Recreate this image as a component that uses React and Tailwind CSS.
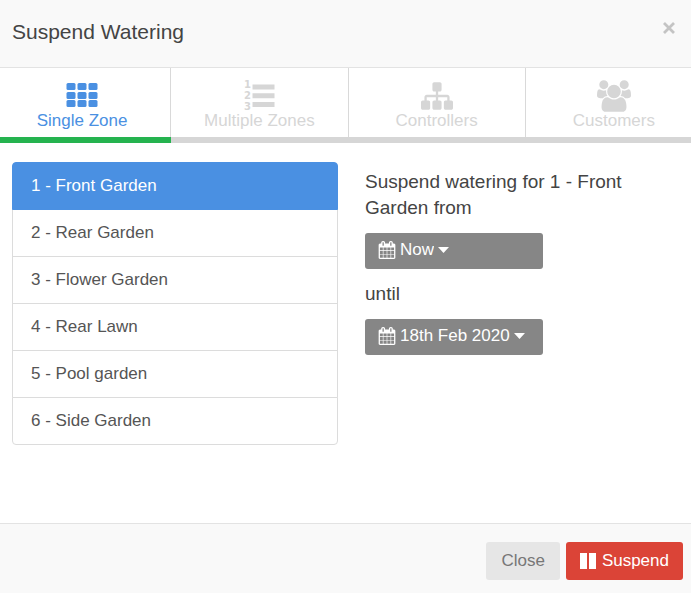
import React, { useState } from 'react';

const GridIcon = () => (
  <svg className="h-8 w-8" viewBox="0 0 32 32" fill="currentColor" aria-hidden="true">
    {[3, 12, 20].map((y) =>
      [0, 11, 22].map((x) => <rect key={`${x}-${y}`} x={x + 0.5} y={y} width="9" height="7" rx="1.5" />)
    )}
  </svg>
);

const ListIcon = () => (
  <svg className="h-8 w-8 overflow-visible" viewBox="0 0 32 32" fill="currentColor" aria-hidden="true">
    <path d="M9.500 4.500h22v5h-22zM9.500 13.200h22v5h-22zM9.500 22h22v5h-22z" />
    <g fontFamily="DejaVu Sans, sans-serif" fontWeight="700" fontSize="10">
      <text x="1" y="8">1</text>
      <text x="1" y="19">2</text>
      <text x="1" y="30">3</text>
    </g>
  </svg>
);

const SitemapIcon = () => (
  <svg className="h-8 w-8" viewBox="0 0 1792 1792" fill="currentColor" aria-hidden="true">
    <path d="M1792 1248v320q0 40-28 68t-68 28h-320q-40 0-68-28t-28-68v-320q0-40 28-68t68-28h96v-192h-512v192h96q40 0 68 28t28 68v320q0 40-28 68t-68 28h-320q-40 0-68-28t-28-68v-320q0-40 28-68t68-28h96v-192h-512v192h96q40 0 68 28t28 68v320q0 40-28 68t-68 28h-320q-40 0-68-28t-28-68v-320q0-40 28-68t68-28h96v-192q0-52 38-90t90-38h512v-192h-96q-40 0-68-28t-28-68v-320q0-40 28-68t68-28h320q40 0 68 28t28 68v320q0 40-28 68t-68 28h-96v192h512q52 0 90 38t38 90v192h96q40 0 68 28t28 68z" />
  </svg>
);

const UsersIcon = () => (
  <svg className="h-8 w-[34px]" viewBox="-64 0 1920 1792" fill="currentColor" aria-hidden="true">
    <path d="M529 896q-162 5-265 128h-134q-82 0-138-40.5t-56-118.5q0-353 124-353 6 0 43.5 21t97.5 42.5 119 21.5q67 0 133-23-5 37-5 66 0 139 81 256zm1071 637q0 120-73 189.5t-194 69.5h-874q-121 0-194-69.5t-73-189.5q0-53 3.5-103.5t14-109 26.5-108.5 43-97.5 62-81 85.5-53.5 111.5-20q10 0 43 21.5t73 48 107 48 135 21.5 135-21.5 107-48 73-48 43-21.5q61 0 111.5 20t85.5 53.5 62 81 43 97.5 26.5 108.5 14 109 3.5 103.5zm-1024-1277q0 106-75 181t-181 75-181-75-75-181 75-181 181-75 181 75 75 181zm704 384q0 159-112.5 271.5t-271.5 112.5-271.5-112.5-112.5-271.5 112.5-271.5 271.5-112.5 271.5 112.5 112.5 271.5zm576 225q0 78-56 118.5t-138 40.5h-134q-103-123-265-128 81-117 81-256 0-29-5-66 66 23 133 23 59 0 119-21.5t97.5-42.5 43.5-21q124 0 124 353zm-128-609q0 106-75 181t-181 75-181-75-75-181 75-181 181-75 181 75 75 181z" />
  </svg>
);

const CalendarIcon = () => (
  <svg className="h-[18px] w-[18px] shrink-0" viewBox="0 0 1792 1792" fill="currentColor" aria-hidden="true">
    <path d="M192 1664h288v-288h-288v288zm352 0h320v-288h-320v288zm-352-352h288v-320h-288v320zm352 0h320v-320h-320v320zm-352-384h288v-288h-288v288zm736 736h320v-288h-320v288zm-384-736h320v-288h-320v288zm768 736h288v-288h-288v288zm-384-352h320v-320h-320v320zm-352-864v-288q0-13-9.5-22.5t-22.5-9.5h-64q-13 0-22.5 9.5t-9.5 22.5v288q0 13 9.5 22.5t22.5 9.5h64q13 0 22.5-9.5t9.5-22.5zm736 864h288v-320h-288v320zm-384-384h320v-288h-320v288zm384 0h288v-288h-288v288zm32-480v-288q0-13-9.5-22.5t-22.5-9.5h-64q-13 0-22.5 9.5t-9.5 22.5v288q0 13 9.5 22.5t22.5 9.5h64q13 0 22.5-9.5t9.5-22.5zm384-64v1280q0 52-38 90t-90 38h-1408q-52 0-90-38t-38-90v-1280q0-52 38-90t90-38h128v-96q0-66 47-113t113-47h64q66 0 113 47t47 113v96h384v-96q0-66 47-113t113-47h64q66 0 113 47t47 113v96h128q52 0 90 38t38 90z" />
  </svg>
);

const tabs = [
  { id: 'single', name: 'Single Zone', icon: <GridIcon /> },
  { id: 'multiple', name: 'Multiple Zones', icon: <ListIcon /> },
  { id: 'controllers', name: 'Controllers', icon: <SitemapIcon /> },
  { id: 'customers', name: 'Customers', icon: <UsersIcon /> },
];

const zones = ['Front Garden', 'Rear Garden', 'Flower Garden', 'Rear Lawn', 'Pool garden', 'Side Garden'];

const DateSelect = ({ id, label, value }) => (
  <div className="flex h-9 w-[178px] items-center rounded-[3px] bg-[#868686] pb-0.5 pl-[13px] text-white">
    <CalendarIcon />
    <select
      id={id}
      aria-label={label}
      defaultValue={value}
      className="ml-1 field-sizing-content appearance-none bg-transparent text-[17px] leading-6 outline-none"
    >
      <option>{value}</option>
    </select>
    <svg className="ml-1 h-1.5 w-[11px]" viewBox="0 0 11 6" fill="currentColor" aria-hidden="true">
      <path d="M0 0h11L5.500 6z" />
    </svg>
  </div>
);

const App = () => {
  const [activeTab, setActiveTab] = useState('single');
  const [zone, setZone] = useState(0);

  return (
    <div className="flex min-h-screen flex-col overflow-hidden bg-white font-['Liberation_Sans',Arial,sans-serif] text-[17px] text-[#555]">
      {/* Header */}
      <header className="flex h-[68px] items-start justify-between border-b border-[#e3e3e3] bg-[#f9f9f9] px-3 pt-4">
        <h1 className="text-[21px] leading-8 text-[#444]">Suspend Watering</h1>
        <button type="button" aria-label="Close dialog" className="flex h-6 w-5 items-center justify-center text-[#c4c4c4]">
          <svg className="h-3 w-3" viewBox="0 0 12 12" fill="none" stroke="currentColor" strokeWidth="2.800" aria-hidden="true">
            <path d="M1 1l10 10M11 1L1 11" />
          </svg>
        </button>
      </header>

      {/* Tabs */}
      <nav className="-mr-3 -ml-1.5 grid grid-cols-4">
        {tabs.map((tab) => (
          <button
            key={tab.id}
            type="button"
            onClick={() => setActiveTab(tab.id)}
            className={`flex flex-col ${activeTab === tab.id ? 'text-[#4a90e2]' : 'text-[#d6d6d6]'}`}
          >
            <span className="flex h-[69px] w-full flex-col items-center border-r border-[#d9d9d9] pt-3">
              {tab.icon}
              <span className="-mt-px leading-5">{tab.name}</span>
            </span>
            <span className={`h-1.5 w-full ${activeTab === tab.id ? 'bg-[#25b34f]' : 'bg-[#d6d6d6]'}`} />
          </button>
        ))}
      </nav>

      {/* Content */}
      <main className="grid grow grid-cols-2 items-start gap-[27px] pt-[19px] pl-3">
        <ul className="pt-px">
          {zones.map((name, i) => (
            <li key={name} className="group -mt-px">
              <button
                type="button"
                onClick={() => setZone(i)}
                className={`block h-12 w-full border px-[18px] text-left group-first:rounded-t-[4px] group-last:rounded-b-[4px] ${
                  zone === i ? 'relative border-[#4a90e2] bg-[#4a90e2] text-white' : 'border-[#dcdcdc] bg-white'
                }`}
              >
                {`${i + 1} - ${name}`}
              </button>
            </li>
          ))}
        </ul>

        <div className="flex flex-col gap-3 pt-[7px] pr-6 text-[19px] leading-[26px] text-[#444]">
          <p>{`Suspend watering for ${zone + 1} - ${zones[zone]} from`}</p>
          <DateSelect id="from" label="Suspend from" value="Now" />
          <p>until</p>
          <DateSelect id="until" label="Suspend until" value="18th Feb 2020" />
        </div>
      </main>

      {/* Footer */}
      <footer className="flex h-[70px] items-center justify-end gap-1.5 border-t border-[#e3e3e3] bg-[#f9f9f9] pt-1 pr-2">
        <button type="button" className="h-[38px] rounded-[3px] bg-[#e6e6e6] px-[15px] text-[#777]">
          Close
        </button>
        <button type="button" className="flex h-[38px] items-center gap-1.5 rounded-[3px] bg-[#db4437] px-3.5 text-white">
          <svg className="h-4 w-4" viewBox="0 0 16 16" fill="currentColor" aria-hidden="true">
            <path d="M0 0h7v16H0zM9 0h7v16H9z" />
          </svg>
          Suspend
        </button>
      </footer>
    </div>
  );
};

export default App;
